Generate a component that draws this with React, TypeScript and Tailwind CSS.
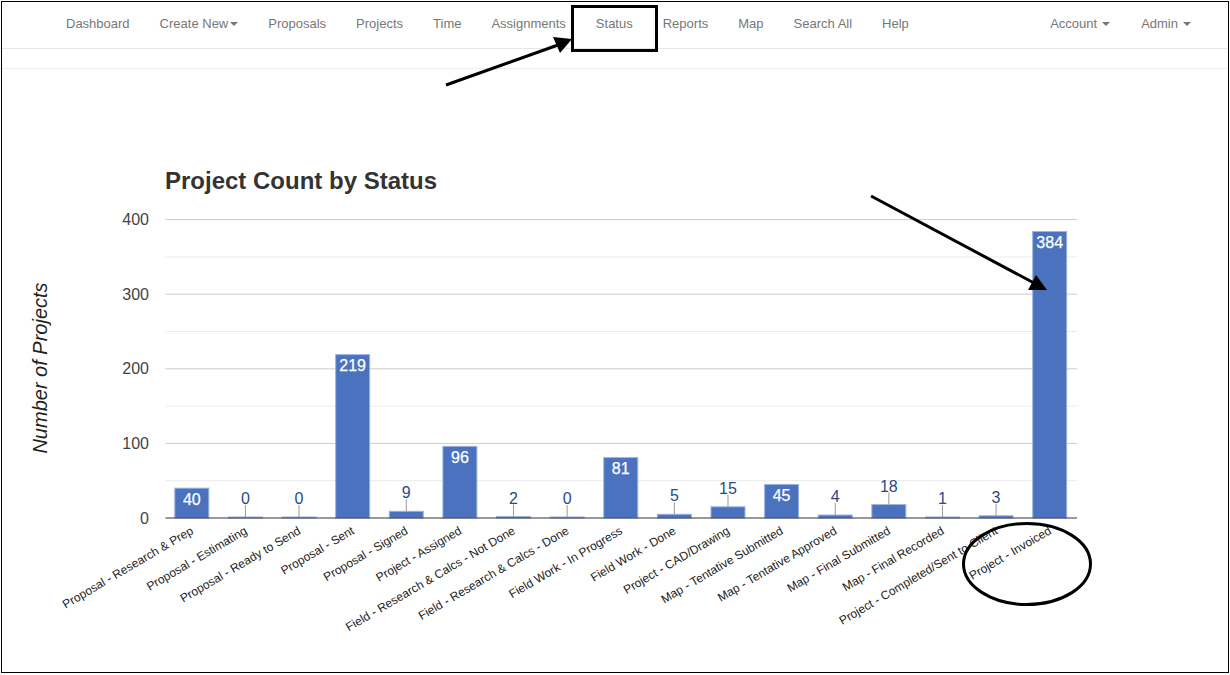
import React from 'react';

const leftLinks = [
  { label: 'Dashboard' },
  { label: 'Create New', caret: true },
  { label: 'Proposals' },
  { label: 'Projects' },
  { label: 'Time' },
  { label: 'Assignments' },
  { label: 'Status' },
  { label: 'Reports' },
  { label: 'Map' },
  { label: 'Search All' },
  { label: 'Help' },
];

const statuses = [
  { name: 'Proposal - Research & Prep', count: 40 },
  { name: 'Proposal - Estimating', count: 0 },
  { name: 'Proposal - Ready to Send', count: 0 },
  { name: 'Proposal - Sent', count: 219 },
  { name: 'Proposal - Signed', count: 9 },
  { name: 'Project - Assigned', count: 96 },
  { name: 'Field - Research & Calcs - Not Done', count: 2 },
  { name: 'Field - Research & Calcs - Done', count: 0 },
  { name: 'Field Work - In Progress', count: 81 },
  { name: 'Field Work - Done', count: 5 },
  { name: 'Project - CAD/Drawing', count: 15 },
  { name: 'Map - Tentative Submitted', count: 45 },
  { name: 'Map - Tentative Approved', count: 4 },
  { name: 'Map - Final Submitted', count: 18 },
  { name: 'Map - Final Recorded', count: 1 },
  { name: 'Project - Completed/Sent to Client', count: 3 },
  { name: 'Project - Invoiced', count: 384 },
];

const PLOT_LEFT = 165.5;
const PLOT_RIGHT = 1077;
const BASE_Y = 518;
const UNIT = 0.746;
const SLOT = (PLOT_RIGHT - PLOT_LEFT) / statuses.length;

const Caret = () => (
  <span className="inline-block w-0 h-0 border-x-4 border-x-transparent border-t-4 border-t-[#777]" />
);

const Chart = () => (
  <svg className="block" width="1226" height="602" viewBox="2 69 1226 602" fontFamily="'Liberation Sans', Arial, sans-serif">
    <text x="165" y="189" fontSize="24" fontWeight="700" fill="#333">Project Count by Status</text>
    <text transform="translate(47 368) rotate(-90)" textAnchor="middle" fontSize="20" fontStyle="italic" fill="#222">Number of Projects</text>

    {[50, 150, 250, 350].map((v) => (
      <line key={v} x1={PLOT_LEFT} x2={PLOT_RIGHT} y1={BASE_Y - v * UNIT} y2={BASE_Y - v * UNIT} stroke="#ebebeb" />
    ))}
    {[100, 200, 300, 400].map((v) => (
      <line key={v} x1={PLOT_LEFT} x2={PLOT_RIGHT} y1={BASE_Y - v * UNIT} y2={BASE_Y - v * UNIT} stroke="#ccc" />
    ))}
    {[0, 100, 200, 300, 400].map((v) => (
      <text key={v} x="149" y={BASE_Y - v * UNIT + 5.5} textAnchor="end" fontSize="16" fill="#444">{v}</text>
    ))}

    {statuses.map((s, i) => {
      const cx = PLOT_LEFT + SLOT * (i + 0.5) - 0.5;
      const h = Math.max(s.count * UNIT, 1);
      const top = BASE_Y - h;
      const inside = s.count >= 40;
      return (
        <g key={s.name}>
          <rect x={cx - 17} y={top} width="34" height={h} fill="#4a72be" stroke="#9db3de" strokeWidth="1" />
          {inside ? (
            <text x={cx} y={top + 16.5} textAnchor="middle" fontSize="16" fill="#fff" stroke="#fff" strokeWidth="0.25">{s.count}</text>
          ) : (
            <>
              <line x1={cx} x2={cx} y1={top} y2={top - 12} stroke="#999" />
              <text x={cx} y={top - 13} textAnchor="middle" fontSize="16" fill="#2a4a80">{s.count}</text>
            </>
          )}
          <text
            transform={`translate(${cx + 2.5} 533) rotate(-30.5)`}
            textAnchor="end"
            fontSize="12"
            fill="#222"
          >
            {s.name}
          </text>
        </g>
      );
    })}
    <line x1={PLOT_LEFT} x2={PLOT_RIGHT} y1={BASE_Y} y2={BASE_Y} stroke="#333" />
  </svg>
);

// hand drawn marks on top of the screenshot
const Annotations = () => (
  <svg className="absolute left-0 top-0 pointer-events-none" width="1230" height="675" viewBox="0 0 1230 675">
    <rect x="572.5" y="6.5" width="84" height="44" fill="none" stroke="#000" strokeWidth="3" />
    <line x1="446" y1="85" x2="558" y2="45" stroke="#000" strokeWidth="3" />
    <polygon points="572,39 553,37 560,53" fill="#000" />
    <line x1="871" y1="196" x2="1034" y2="283" stroke="#000" strokeWidth="3" />
    <polygon points="1047,290 1028,290 1036,275" fill="#000" />
    <ellipse cx="1027" cy="564" rx="63.5" ry="40.5" fill="none" stroke="#000" strokeWidth="3" />
  </svg>
);

export default function App() {
  return (
    <div className="relative w-[1230px] h-[675px] bg-white overflow-hidden font-['Liberation_Sans',Arial,sans-serif]">
      <div className="w-[1228px] h-[672px] ml-px mt-px border border-black flex flex-col">
        <nav className="h-[47px] shrink-0 border-b border-[#e7e7e7] flex items-center justify-between pb-[2px] pl-[64px] pr-[37px] text-[13px] text-[#777]">
          <ul className="flex items-center gap-[30px]">
            {leftLinks.map((l) => (
              <li key={l.label} className="flex items-center gap-0.5">
                {l.label}
                {l.caret && <Caret />}
              </li>
            ))}
          </ul>
          <ul className="flex items-center gap-[31px]">
            <li className="flex items-center gap-[5px]">Account <Caret /></li>
            <li className="flex items-center gap-[5px]">Admin <Caret /></li>
          </ul>
        </nav>
        <div className="h-5 shrink-0 border-b border-[#eee]" />
        <Chart />
      </div>
      <Annotations />
    </div>
  );
}
